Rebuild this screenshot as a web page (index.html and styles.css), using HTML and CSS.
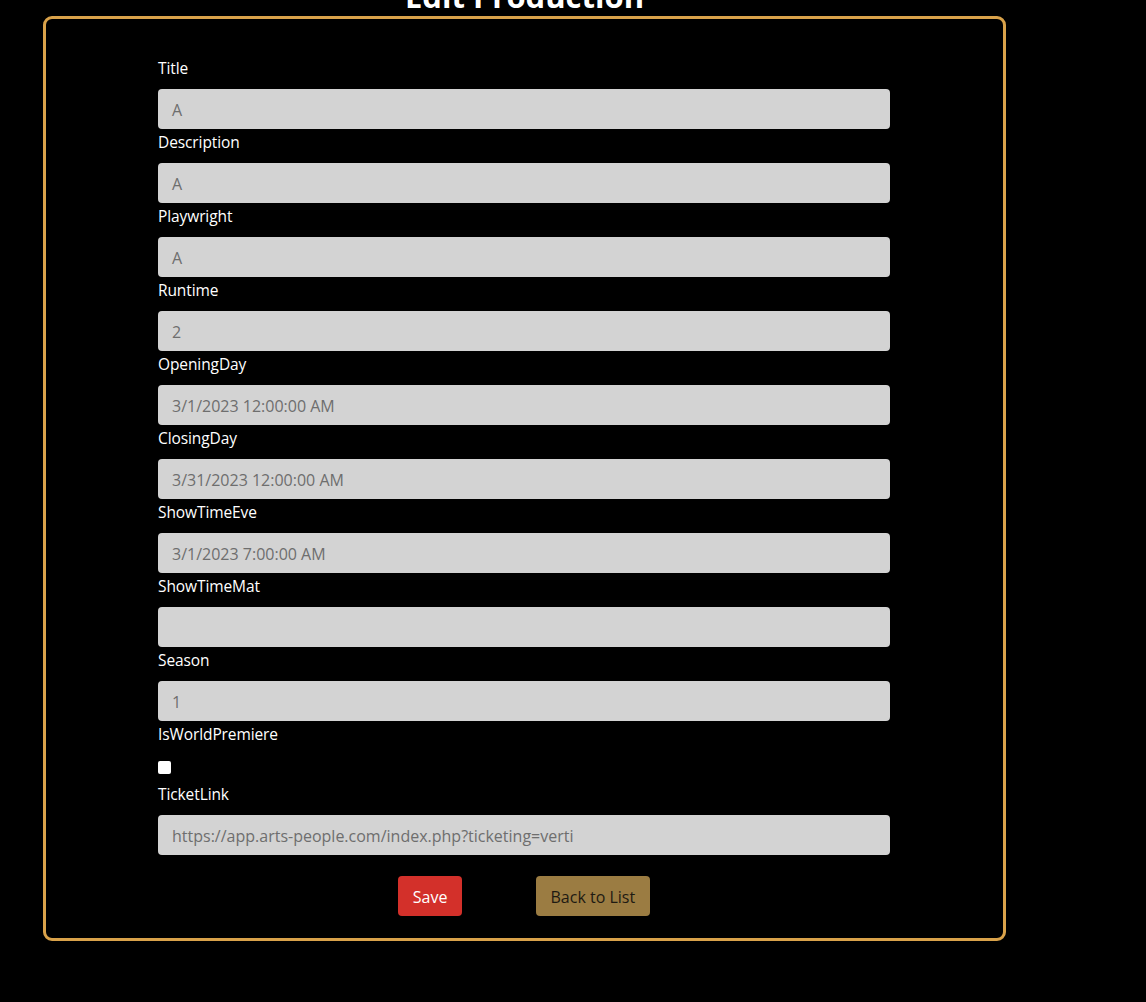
FILE: index.html
```html
<!DOCTYPE html>
<html>
<head>
<meta charset="utf-8">
<link rel="stylesheet" href="styles.css">
</head>
<body>
<div class="page">
  <h1 class="page-title">Edit Production</h1>
  <div class="panel">
    <form class="form">
      <label class="label">Title</label>
      <div class="input">A</div>
      <label class="label">Description</label>
      <div class="input">A</div>
      <label class="label">Playwright</label>
      <div class="input">A</div>
      <label class="label">Runtime</label>
      <div class="input">2</div>
      <label class="label">OpeningDay</label>
      <div class="input">3/1/2023 12:00:00 AM</div>
      <label class="label">ClosingDay</label>
      <div class="input">3/31/2023 12:00:00 AM</div>
      <label class="label">ShowTimeEve</label>
      <div class="input">3/1/2023 7:00:00 AM</div>
      <label class="label">ShowTimeMat</label>
      <div class="input"></div>
      <label class="label">Season</label>
      <div class="input">1</div>
      <label class="label">IsWorldPremiere</label>
      <div class="check-row"><span class="checkbox"></span></div>
      <label class="label">TicketLink</label>
      <div class="input">https://app.arts-people.com/index.php?ticketing=verti</div>
      <div class="actions">
        <span class="btn btn-save">Save</span>
        <span class="btn btn-back">Back to List</span>
      </div>
    </form>
  </div>
</div>
</body>
</html>
```
FILE: styles.css
```css
html, body {
  margin: 0;
  padding: 0;
  background: #000;
}
body {
  font-family: "Open Sans", "Noto Sans", sans-serif;
  color: #fff;
}
.page {
  width: 963px;
  margin-left: 43px;
}
.page-title {
  margin: -24px 0 0 0;
  height: 40px;
  line-height: 40px;
  font-size: 31px;
  font-weight: 700;
  text-align: center;
  color: #fff;
}
.panel {
  border: 3px solid #d9a24a;
  border-radius: 9px;
  padding: 36px 0 22px 112px;
}
.form {
  width: 732px;
  display: flex;
  flex-direction: column;
}
.label {
  display: block;
  font-size: 15.5px;
  line-height: 26px;
  height: 24px;
  margin-bottom: 10px;
  color: #fff;
  letter-spacing: -0.1px;
}
.input {
  height: 40px;
  box-sizing: border-box;
  background: #d3d3d3;
  border-radius: 4px;
  padding: 0 14px;
  font-size: 16px;
  line-height: 43px;
  color: #6e6e6e;
  white-space: nowrap;
}
.check-row {
  height: 26px;
  display: flex;
  align-items: flex-start;
  padding-top: 6px;
  box-sizing: border-box;
}
.checkbox {
  width: 13px;
  height: 13px;
  background: #fff;
  border-radius: 2px;
}
.actions {
  display: flex;
  justify-content: center;
  gap: 74px;
  margin-top: 21px;
}
.btn {
  height: 40px;
  line-height: 43px;
  padding: 0 14.5px;
  border-radius: 4px;
  font-size: 16px;
}
.btn-save {
  background: #d3302a;
  color: #fff;
}
.btn-back {
  background: #9b7c42;
  color: #1e1a12;
}
```
